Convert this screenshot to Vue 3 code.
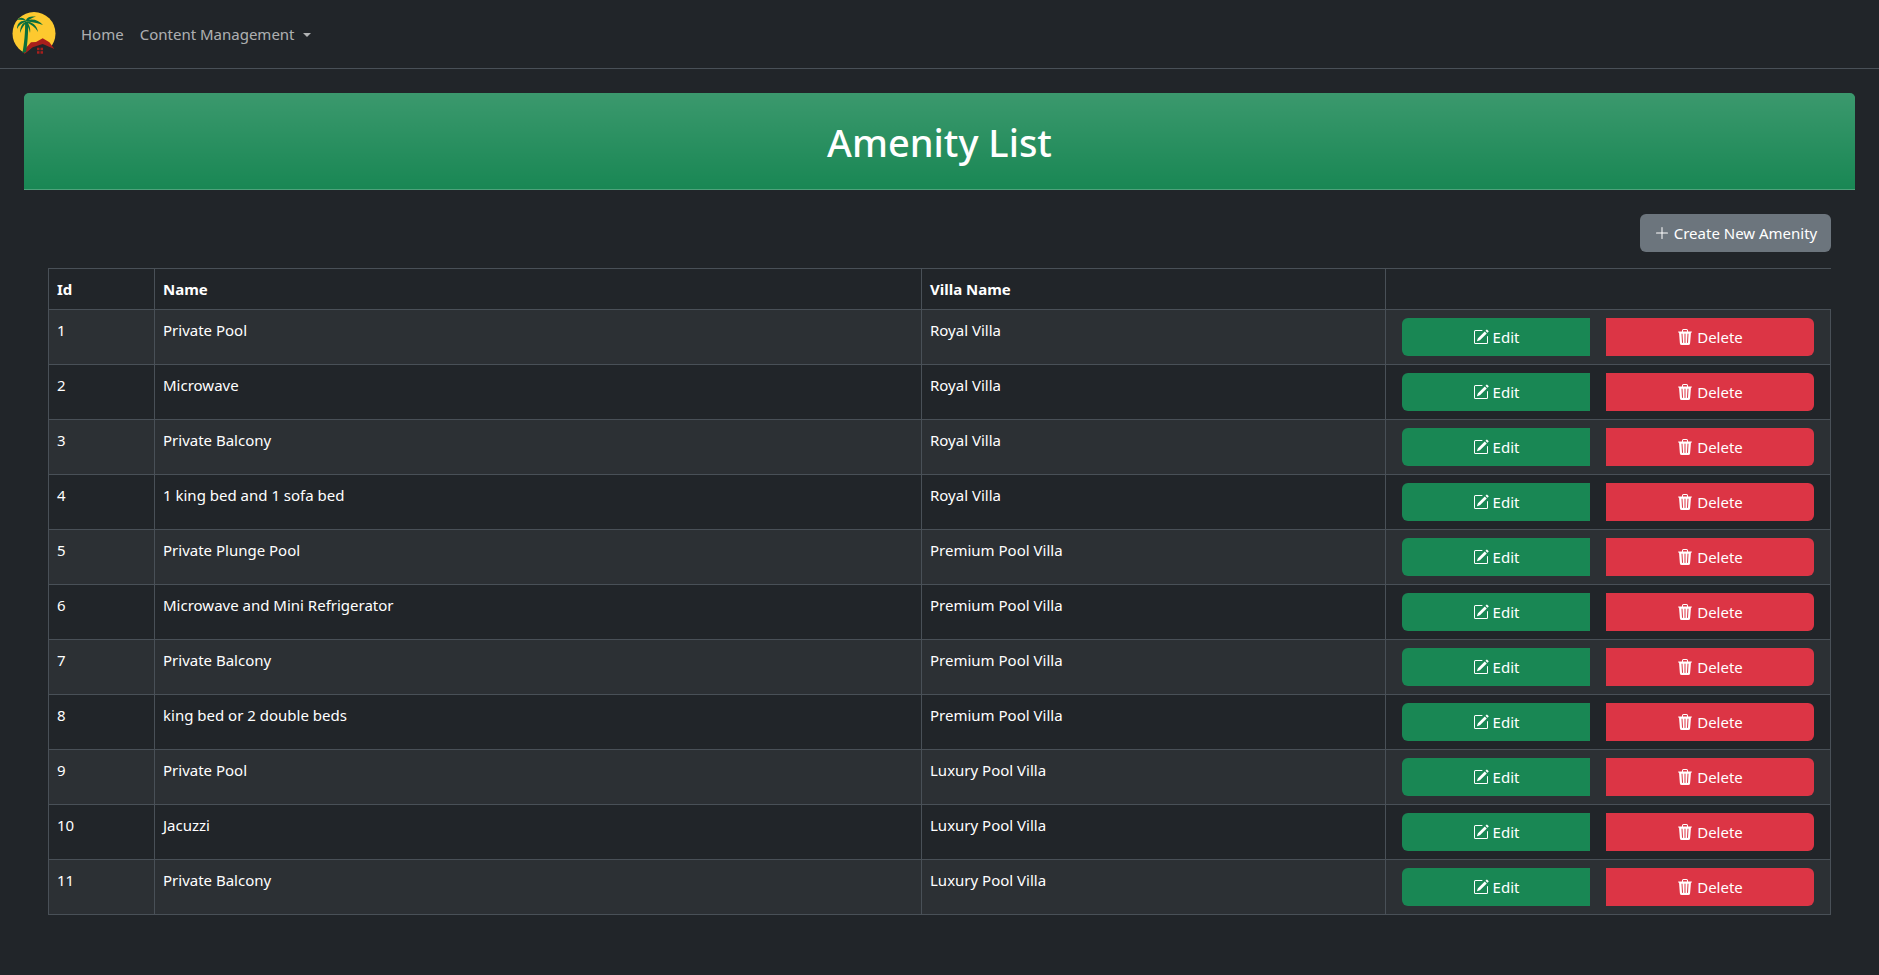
<template>
  <nav class="topbar">
    <svg class="logo" viewBox="0 0 44 44" width="44" height="44">
      <circle cx="22" cy="21.5" r="21.5" fill="#fdc92f" />
      <path d="M12 42 L21 34 L31 30 L44 38 L44 44 L12 44 Z" fill="#212529" />
      <path d="M11.4 38.7 L19 30.3 L24 30 L30.7 26.3 L37.4 30.3 L42.4 37 L30.7 32 L20.7 35.3 L12.4 42 Z" fill="#a81f1c" />
      <g fill="#0b6e3c">
        <path d="M13 10 L16 10 C16.5 20 15.5 32 14 40 L10.5 41 C12 32 13.5 20 13 10 Z" />
        <path d="M14.5 9 C11 5 8 5 5 8 C8 7.5 11 8 14.5 9 Z" />
        <path d="M14.5 9 C9 8 5 11 5 17 C7 13 10 11 14.5 9.5 Z" />
        <path d="M14 10 C10 11 8 15 8 21 C10 16 12 13 14.5 10.5 Z" />
        <path d="M14 9 C14 5 19 4 24 4.5 C20 6 17 7 15 9.5 Z" />
        <path d="M14.5 8.5 C20 6 27 8 31 13 C26 11 20 10 15 9.5 Z" />
        <path d="M14.5 9.5 C20 10 25 13 26 20 C23 15 19 12 14.5 10.5 Z" />
        <path d="M14.5 10 C17 12 19 16 18 21 C17 16 15 13 14 10.5 Z" />
      </g>
      <g fill="#a81f1c">
        <rect x="25" y="35.7" width="2.5" height="2.5" />
        <rect x="28.5" y="35.7" width="2.5" height="2.5" />
        <rect x="25" y="39.2" width="2.5" height="2.5" />
        <rect x="28.5" y="39.2" width="2.5" height="2.5" />
      </g>
    </svg>
    <a class="nav-link">Home</a>
    <a class="nav-link">Content Management<span class="caret"></span></a>
  </nav>

  <main class="page">
    <header class="banner">
      <h2>Amenity List</h2>
    </header>

    <section class="content">
      <div class="toolbar">
        <button class="btn btn-grey">
          <svg class="icon" viewBox="0 0 16 16"><path d="M8 2a.5.5 0 0 1 .5.5v5h5a.5.5 0 0 1 0 1h-5v5a.5.5 0 0 1-1 0v-5h-5a.5.5 0 0 1 0-1h5v-5A.5.5 0 0 1 8 2Z" /></svg>
          Create New Amenity
        </button>
      </div>

      <table class="grid">
        <colgroup>
          <col class="col-id" />
          <col class="col-name" />
          <col class="col-villa" />
          <col />
        </colgroup>
        <thead>
          <tr>
            <th>Id</th>
            <th>Name</th>
            <th>Villa Name</th>
            <th></th>
          </tr>
        </thead>
        <tbody>
          <tr v-for="row in amenities" :key="row.id">
            <td>{{ row.id }}</td>
            <td>{{ row.name }}</td>
            <td>{{ row.villa }}</td>
            <td class="actions">
              <div class="action-row">
                <a class="btn btn-edit">
                  <svg class="icon" viewBox="0 0 16 16">
                    <path d="M15.502 1.94a.5.5 0 0 1 0 .706L14.459 3.69l-2-2L13.502.646a.5.5 0 0 1 .707 0l1.293 1.293zm-1.75 2.456-2-2L4.939 9.21a.5.5 0 0 0-.121.196l-.805 2.414a.25.25 0 0 0 .316.316l2.414-.805a.5.5 0 0 0 .196-.12l6.813-6.814z" />
                    <path fill-rule="evenodd" d="M1 13.5A1.5 1.5 0 0 0 2.5 15h11a1.5 1.5 0 0 0 1.5-1.5v-6a.5.5 0 0 0-1 0v6a.5.5 0 0 1-.5.5h-11a.5.5 0 0 1-.5-.5v-11a.5.5 0 0 1 .5-.5H9a.5.5 0 0 0 0-1H2.5A1.5 1.5 0 0 0 1 2.5v11z" />
                  </svg>
                  Edit
                </a>
                <a class="btn btn-delete">
                  <svg class="icon" viewBox="0 0 16 16">
                    <path d="M11 1.5v1h3.5a.5.5 0 0 1 0 1h-.538l-.853 10.66A2 2 0 0 1 11.115 16h-6.23a2 2 0 0 1-1.994-1.84L2.038 3.5H1.5a.5.5 0 0 1 0-1H5v-1A1.5 1.5 0 0 1 6.5 0h3A1.5 1.5 0 0 1 11 1.5Zm-5 0v1h4v-1a.5.5 0 0 0-.5-.5h-3a.5.5 0 0 0-.5.5ZM4.5 5.029l.5 8.5a.5.5 0 1 0 .998-.06l-.5-8.5a.5.5 0 1 0-.998.06Zm6.53-.528a.5.5 0 0 0-.528.47l-.5 8.5a.5.5 0 0 0 .998.058l.5-8.5a.5.5 0 0 0-.47-.528ZM8 4.5a.5.5 0 0 0-.5.5v8.5a.5.5 0 0 0 1 0V5a.5.5 0 0 0-.5-.5Z" />
                  </svg>
                  Delete
                </a>
              </div>
            </td>
          </tr>
        </tbody>
      </table>
    </section>
  </main>
</template>

<script setup>
const amenities = [
  { id: 1, name: 'Private Pool', villa: 'Royal Villa' },
  { id: 2, name: 'Microwave', villa: 'Royal Villa' },
  { id: 3, name: 'Private Balcony', villa: 'Royal Villa' },
  { id: 4, name: '1 king bed and 1 sofa bed', villa: 'Royal Villa' },
  { id: 5, name: 'Private Plunge Pool', villa: 'Premium Pool Villa' },
  { id: 6, name: 'Microwave and Mini Refrigerator', villa: 'Premium Pool Villa' },
  { id: 7, name: 'Private Balcony', villa: 'Premium Pool Villa' },
  { id: 8, name: 'king bed or 2 double beds', villa: 'Premium Pool Villa' },
  { id: 9, name: 'Private Pool', villa: 'Luxury Pool Villa' },
  { id: 10, name: 'Jacuzzi', villa: 'Luxury Pool Villa' },
  { id: 11, name: 'Private Balcony', villa: 'Luxury Pool Villa' }
];
</script>

<style>
html, body { margin: 0; background: #212529; }
body { min-height: 975px; }
</style>

<style scoped>
.topbar {
  display: flex;
  align-items: center;
  height: 68px;
  padding: 0 12px;
  border-bottom: 1px solid #495057;
  font-family: "Noto Sans", sans-serif;
  font-size: 15px;
}
.logo { margin-right: 25px; flex: none; }
.nav-link { color: rgba(255, 255, 255, 0.65); margin-right: 16px; }
.caret {
  display: inline-block;
  margin-left: 8px;
  vertical-align: 3px;
  border-top: 4.8px solid currentColor;
  border-left: 4.8px solid transparent;
  border-right: 4.8px solid transparent;
}
.page {
  padding: 24px 24px 0;
  font-family: "Noto Sans", sans-serif;
  font-size: 15px;
  color: #fff;
}
.banner {
  height: 96px;
  padding-top: 2px;
  box-sizing: border-box;
  margin-bottom: 1px;
  display: flex;
  align-items: center;
  justify-content: center;
  background: #198754 linear-gradient(180deg, rgba(255, 255, 255, 0.15), rgba(255, 255, 255, 0));
  box-shadow: 0 1px 0 #4fa27b;
  border-radius: 5px 5px 0 0;
}
.banner h2 { margin: 0; font-size: 38px; font-weight: 500; color: #fff; }
.content { padding: 24px 24px 0; }
.toolbar { display: flex; justify-content: flex-end; margin-bottom: 16px; }
.btn {
  display: inline-flex;
  align-items: center;
  justify-content: center;
  gap: 4px;
  height: 38px;
  box-sizing: border-box;
  border: 0;
  color: #fff;
  font: inherit;
}
.btn-grey { width: 191px; background: #6c757d; border-radius: 6px; }
.icon { width: 16px; height: 16px; fill: currentColor; flex: none; }
.grid {
  width: 100%;
  table-layout: fixed;
  border-collapse: collapse;
  color: #fff;
}
.col-id { width: 106px; }
.col-name { width: 767px; }
.col-villa { width: 464px; }
.grid th, .grid td {
  border: 1px solid #495057;
  padding: 8px;
  text-align: left;
  vertical-align: top;
  line-height: 24px;
}
.grid thead th { font-weight: 700; }
.grid thead th:last-child { border-right: 0; }
.grid tbody tr:nth-child(odd) td { background: #2c3034; }
.grid .actions { padding: 8px 16px; }
.action-row { display: flex; gap: 16px; }
.btn-edit { flex: 188; background: #198754; border-radius: 6px 0 0 6px; }
.btn-delete { flex: 208; background: #dc3545; border-radius: 0 6px 6px 0; }
</style>
